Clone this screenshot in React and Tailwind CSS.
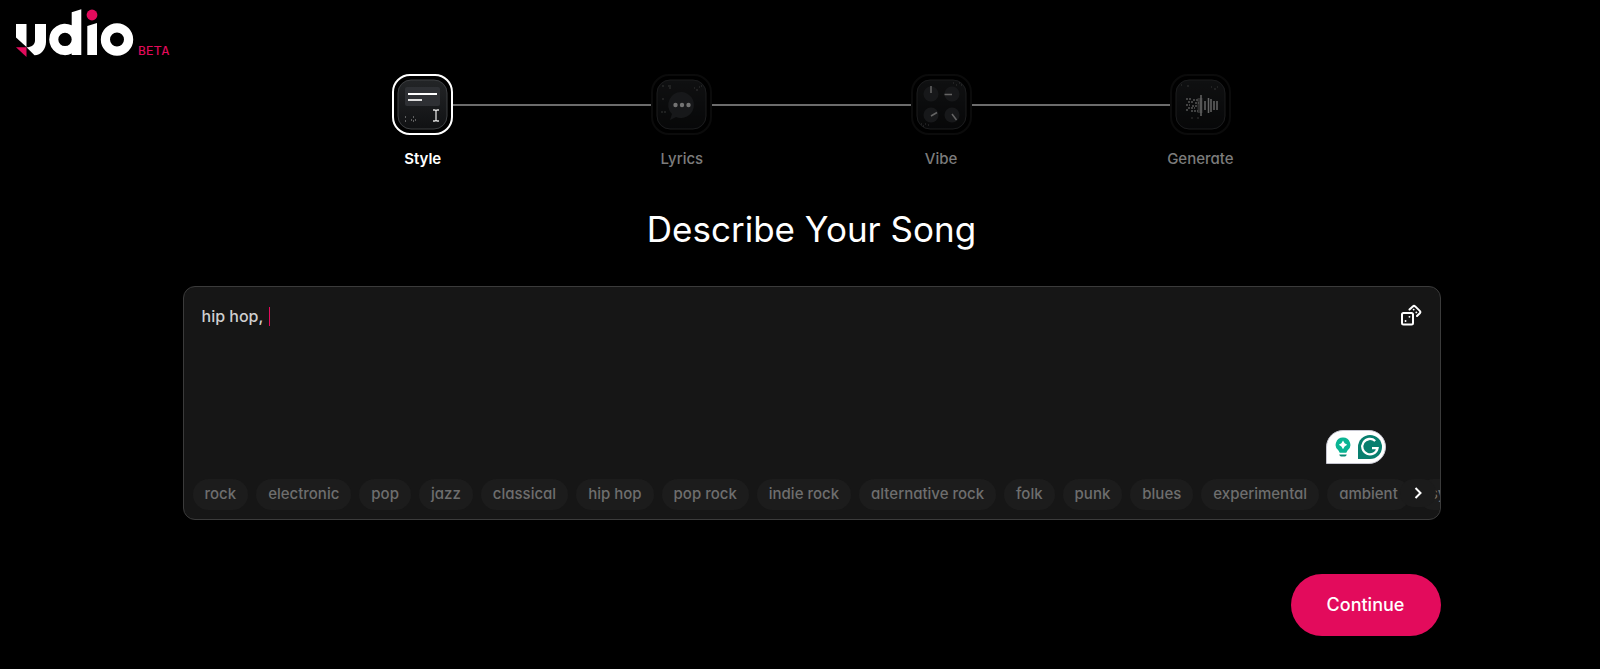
import { useState } from "react";

const GENRES = [
  "rock", "electronic", "pop", "jazz", "classical", "hip hop", "pop rock", "indie rock",
  "alternative rock", "folk", "punk", "blues", "experimental", "ambient", "synth",
];

function Logo() {
  return (
    <svg width="120" height="50" viewBox="15 8 120 50" role="img" aria-label="udio">
      <g fill="#fff">
        <path d="M16 24H26.500V47L16 37.500Z" />
        <path d="M35 24H46V42C46 49 41 55.300 34.500 55.300L26.500 47.300C31.500 47.300 35 44.500 35 40.500Z" />
        <path fillRule="evenodd" d="M71.700 12.300L81.300 9.300V55H71.700V53.600A15.700 15.700 0 1 1 71.700 25.300ZM65 32.700A6.700 6.700 0 1 0 65 46.100A6.700 6.700 0 1 0 65 32.700Z" />
        <path d="M87.300 26L97 23V55H87.300Z" />
        <path fillRule="evenodd" d="M117 23.300A16.200 16.200 0 1 0 117 55.700A16.200 16.200 0 1 0 117 23.300ZM117 32.500A7 7 0 1 1 117 46.500A7 7 0 1 1 117 32.500Z" />
      </g>
      <circle cx="92" cy="15" r="5.400" fill="#e30b5c" />
      <path d="M16 47.300H26.500V57Z" fill="#e30b5c" />
    </svg>
  );
}

function Tile({ id, children }) {
  return (
    <svg className="size-full" viewBox="0 0 51 51" aria-hidden="true">
      <defs>
        <linearGradient id={id} x1="0" y1="0" x2="0" y2="1">
          <stop offset="0" stopColor="#232527" />
          <stop offset="1" stopColor="#101113" />
        </linearGradient>
      </defs>
      <rect x="1" y="1" width="49" height="49" rx="13" fill={`url(#${id})`} stroke="#3e4043" />
      {children}
    </svg>
  );
}

const StyleArt = () => (
  <Tile id="tile-style">
    <rect x="8" y="8" width="35" height="19" rx="2" fill="#2e3034" />
    <path d="M11 15H40" stroke="#fff" strokeWidth="2" />
    <path d="M11 21H25" stroke="#ddd" strokeWidth="2" />
    <path d="M36 31H38L39 32L40 31H42M39 32V41M36 42H38L39 41L40 42H42" stroke="#ddd" strokeWidth="1.300" fill="none" />
    <path d="M8 38h1M8 42h1M16 38h1M14 41h1M18 41h1M16 42h1" stroke="#aaa" />
  </Tile>
);

const LyricsArt = () => (
  <Tile id="tile-lyrics">
    <path d="M26 13A13 13 0 1 1 20 38L14 41L16 35A13 13 0 0 1 26 13Z" fill="#34363a" />
    <g fill="#fff">
      <circle cx="19.500" cy="26" r="2.200" />
      <circle cx="26" cy="26" r="2.200" />
      <circle cx="32.500" cy="26" r="2.200" />
    </g>
    <path d="M6 7h2M12 7h3M13 9h2M6 20h2M5 33h2M8 33h2M38 9h1M40 11h2M43 8h1M45 7h1" stroke="#777" />
  </Tile>
);

const VibeArt = () => (
  <Tile id="tile-vibe">
    <g fill="#34363a">
      <circle cx="15" cy="15" r="7.500" />
      <circle cx="36" cy="15" r="7.500" />
      <circle cx="15" cy="36" r="7.500" />
      <circle cx="36" cy="36" r="7.500" />
    </g>
    <path d="M15 7V14M28.500 15.500H36M15 37L21 33.500M36 35L40.500 41" stroke="#ddd" strokeWidth="1.500" />
    <path d="M37 4h1M40 6h1M43 4h1M45 6h1M5 45h1M7 47h1M9 45h1M12 46h1" stroke="#777" />
  </Tile>
);

const GenerateArt = () => (
  <Tile id="tile-generate">
    <path d="M25 19V34" stroke="#666" strokeWidth="5" />
    <path d="M26 16V37M30 22V31M33.500 19V34M36 20V33M39 22V31M42 22V31" stroke="#ddd" strokeWidth="1.500" />
    <path d="M11 20H16M18 21H23M13 23H18M20 24H24M11 26H15M17 27H23M13 29H20M11 31H14M16 32H23" stroke="#bbb" strokeWidth="1.400" strokeDasharray="2 1" />
    <path d="M6 6h1M12 7h2M36 8h1M39 10h2M42 8h1M16 39h2M22 39h2" stroke="#777" />
  </Tile>
);

const STEPS = [
  { name: "Style", Art: StyleArt },
  { name: "Lyrics", Art: LyricsArt },
  { name: "Vibe", Art: VibeArt },
  { name: "Generate", Art: GenerateArt },
];

function Stepper() {
  return (
    <ol className="mx-auto flex w-2/3">
      {STEPS.map(({ name, Art }, i) => (
        <li key={name} className={i ? "flex flex-1" : "flex"}>
          {i > 0 && <span className="mt-[30px] h-0.5 flex-1 bg-[#6c6c6c]" />}
          <div className="flex w-[61px] flex-col items-center gap-3" aria-current={i === 0 ? "step" : undefined}>
            <div
              className={
                i === 0
                  ? "size-[61px] rounded-[18px] border-2 border-white p-[3px]"
                  : "size-[61px] rounded-[18px] border-2 border-[#0b0b0b] p-[3px]"
              }
            >
              <div className={i === 0 ? "" : "opacity-45"}>
                <Art />
              </div>
            </div>
            <span
              className={
                i === 0
                  ? "text-[15px] leading-6 font-semibold whitespace-nowrap text-white"
                  : "text-[15px] leading-6 font-medium whitespace-nowrap text-[#7c7c7c]"
              }
            >
              {name}
            </span>
          </div>
        </li>
      ))}
    </ol>
  );
}

function DiceIcon() {
  return (
    <svg width="22" height="22" viewBox="0 0 22 22" fill="none" stroke="#fff" strokeWidth="2" strokeLinejoin="round" strokeLinecap="round" aria-hidden="true">
      <rect x="2" y="9" width="11" height="11.500" rx="1.500" />
      <path d="M9.500 5.500L12.800 2.400Q14 1.400 15.200 2.400L19.800 6.900Q20.900 8 19.800 9.200L17 12" />
      <path d="M5.500 17h.1M9.400 12.800h.1M13.600 5.600h.1M16.300 8.400h.1" strokeWidth="1.800" />
    </svg>
  );
}

function AssistantBadge() {
  return (
    <button
      type="button"
      aria-label="Writing assistant"
      className="absolute right-[54px] bottom-[55px] flex h-[34px] w-[60px] items-center justify-between rounded-full rounded-bl-none border border-[#c5c5cf] bg-white pr-[3px] pl-2"
    >
      <svg width="16" height="22" viewBox="0 0 17 22" aria-hidden="true">
        <path d="M8.500 1A7.700 7.700 0 0 1 13.300 14.800L12 17H5L3.700 14.800A7.700 7.700 0 0 1 8.500 1Z" fill="#0bb493" />
        <path d="M8.500 4L10.200 7L13 8.700L10.200 10.400L8.500 13.400L6.800 10.400L4 8.700L6.800 7Z" fill="#fff" />
        <path d="M4.500 19H12.500Q12 21 10.500 21H6.500Q5 21 4.500 19Z" fill="#078b75" />
      </svg>
      <svg width="24" height="24" viewBox="0 0 24 24" aria-hidden="true">
        <path d="M12 0A12 12 0 1 1 12 24H0V12A12 12 0 0 1 12 0Z" fill="#087f6f" />
        <path d="M17.200 6A7.700 7.700 0 1 0 19.500 13.200H14" fill="none" stroke="#fff" strokeWidth="2.300" />
      </svg>
    </button>
  );
}

export default function App() {
  const [prompt, setPrompt] = useState("hip hop, ");
  const [pristine, setPristine] = useState(true);

  return (
    <div className="min-h-screen bg-black font-['Inter',sans-serif] text-white [font-feature-settings:'cv11']">
      <header className="flex h-[74px] items-start pt-2 pl-[15px]">
        <a href="/" className="flex items-end gap-[3px]">
          <Logo />
          <span className="font-['DejaVu_Sans_Mono',monospace] text-[13px] leading-[14px] text-[#e30b5c]">BETA</span>
        </a>
      </header>

      <main className="pl-[23px]">
        <div className="mx-auto max-w-[1258px]">
          <Stepper />
          <h1 className="mt-9 text-center text-[35px] leading-[44px]">Describe Your Song</h1>

          <section className="relative mt-[35px] flex flex-col overflow-hidden rounded-xl border border-[#3b3b3b] bg-[#161616]">
            <div className="flex items-start px-[18px] pt-[17px]">
              <div className="relative flex-1">
                <textarea
                  aria-label="Song description"
                  value={prompt}
                  onChange={(e) => {
                    setPrompt(e.target.value);
                    setPristine(false);
                  }}
                  onFocus={() => setPristine(false)}
                  className="block h-[175px] w-full resize-none bg-transparent text-base leading-6 font-medium text-[#cfcfcf] caret-[#e30b5c] outline-none"
                />
                {pristine && <span className="absolute top-[3px] left-[67px] h-[19px] w-px bg-[#e30b5c]" />}
              </div>
              <button type="button" aria-label="Randomize prompt">
                <DiceIcon />
              </button>
            </div>

            <div className="relative flex gap-2 overflow-hidden pb-[9px] pl-[9px]">
              {GENRES.map((g) => (
                <button
                  key={g}
                  type="button"
                  className="h-[31px] shrink-0 rounded-full bg-[#1c1c1c] px-3 pb-0.5 text-[15px] leading-6 font-medium whitespace-nowrap text-[#6e6e6e]"
                >
                  {g}
                </button>
              ))}
              <button
                type="button"
                aria-label="More genres"
                className="absolute top-0 right-1 flex h-7 w-9 items-center justify-center rounded-full bg-[#1b1b1b]"
              >
                <svg width="8" height="12" viewBox="0 0 8 12" fill="none" stroke="#fff" strokeWidth="2" aria-hidden="true">
                  <path d="M1.500 1L6.500 6L1.500 11" />
                </svg>
              </button>
            </div>
            <AssistantBadge />
          </section>

          <div className="mt-[54px] flex justify-end">
            <button type="button" className="h-[62px] w-[150px] rounded-full bg-[#e30b5c] text-lg font-medium text-white">
              Continue
            </button>
          </div>
        </div>
      </main>
    </div>
  );
}
